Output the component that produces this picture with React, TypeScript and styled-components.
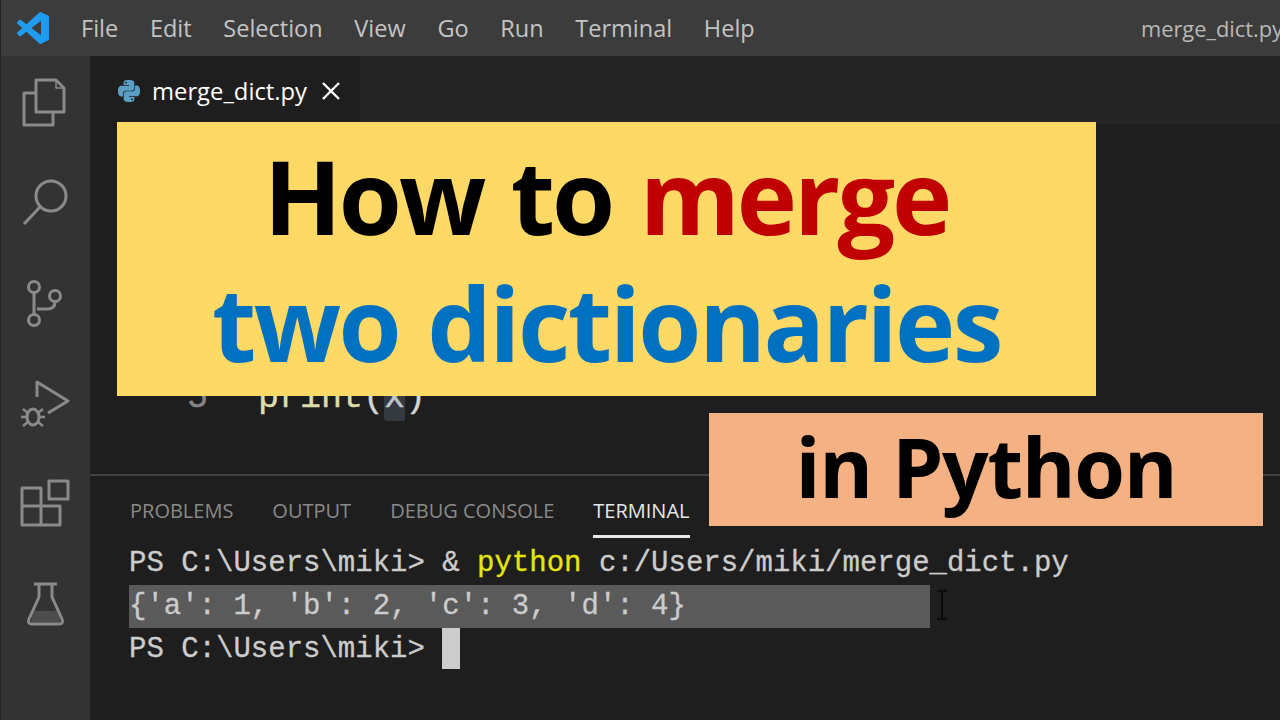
import React from 'react';
import styled, { createGlobalStyle } from 'styled-components';
import { SiPython } from 'react-icons/si';

const GlobalStyle = createGlobalStyle`
  html, body {
    margin: 0;
    padding: 0;
    background: #1e1e1e;
    overflow: hidden;
  }
`;

const Page = styled.div`
  position: relative;
  width: 1280px;
  height: 720px;
  display: flex;
  flex-direction: column;
  overflow: hidden;
  font-family: 'Open Sans', 'Noto Sans', sans-serif;
  border-left: 1px solid #222;
  box-sizing: border-box;
`;

const TitleBar = styled.header`
  height: 56px;
  flex: none;
  display: flex;
  align-items: center;
  background: #3c3c3c;
  padding-left: 16px;
  white-space: nowrap;
`;

const Menu = styled.nav`
  display: flex;
  gap: 31.7px;
  margin-left: 32px;
`;

const MenuItem = styled.span`
  font-size: 23.5px;
  color: #c4c4c4;
`;

const WindowTitle = styled.span`
  margin-left: auto;
  margin-right: -3px;
  font-size: 21.8px;
  color: #b8b8b8;
`;

const Body = styled.div`
  flex: 1;
  display: flex;
  min-height: 0;
`;

const ActivityBar = styled.aside`
  width: 89px;
  flex: none;
  box-sizing: border-box;
  background: #333333;
  display: flex;
  flex-direction: column;
  align-items: center;
  gap: 40px;
  padding-top: 17px;
`;

const ActivityIcon = styled.svg`
  width: 60px;
  height: 60px;
  flex: none;
  fill: none;
  stroke: #8a8a8a;
  stroke-width: 3;
  stroke-linejoin: round;
`;

const Main = styled.main`
  flex: 1;
  display: flex;
  flex-direction: column;
  min-width: 0;
`;

const TabStrip = styled.div`
  height: 68px;
  flex: none;
  display: flex;
  background: #252526;
`;

const Tab = styled.div`
  width: 270px;
  box-sizing: border-box;
  display: flex;
  align-items: center;
  padding: 2px 0 0 28px;
  background: #1e1e1e;
  color: #ffffff;
  font-size: 23.8px;
  font-weight: 500;
`;

const TabName = styled.span`
  margin-left: 12px;
  margin-right: 14px;
`;

const Editor = styled.section`
  height: 350px;
  flex: none;
  box-sizing: border-box;
  display: flex;
  flex-direction: column;
  justify-content: flex-end;
  padding-bottom: 53px;
  background: #1e1e1e;
`;

const CodeLine = styled.div`
  display: flex;
  height: 46px;
  line-height: 46px;
  font-family: 'Liberation Mono', monospace;
  font-size: 35px;
  -webkit-text-stroke: 0.4px currentColor;
`;

const LineNumber = styled.span`
  width: 168px;
  box-sizing: border-box;
  padding-left: 97px;
  color: #858585;
`;

const Fn = styled.span`
  color: #dcdcaa;
`;

const Paren = styled.span`
  color: #d4d4d4;
`;

const Highlighted = styled.span`
  color: #bcc6cc;
  background: #343a40;
  border-radius: 3px;
`;

const Panel = styled.section`
  flex: 1;
  background: #1e1e1e;
  border-top: 2px solid #414141;
  min-height: 0;
`;

const PanelTabs = styled.div`
  display: flex;
  gap: 39px;
  height: 62px;
  padding-left: 40px;
  align-items: flex-end;
`;

const PanelTab = styled.span<{ $active?: boolean }>`
  height: 39px;
  box-sizing: border-box;
  border-bottom: 3px solid ${(p) => (p.$active ? '#e7e7e7' : 'transparent')};
  font-size: 20px;
  line-height: 24px;
  color: ${(p) => (p.$active ? '#e7e7e7' : '#8a8a8a')};
`;

const Terminal = styled.div`
  padding: 4px 0 0 39px;
  font-family: 'Liberation Mono', monospace;
  font-size: 29px;
  color: #cccccc;
  -webkit-text-stroke: 0.3px currentColor;
`;

const TermLine = styled.div<{ $selected?: boolean }>`
  position: relative;
  display: flex;
  height: 43px;
  line-height: 43px;
  white-space: pre;
  width: ${(p) => (p.$selected ? '801px' : 'auto')};
  background: ${(p) => (p.$selected ? '#5a5a5a' : 'transparent')};
`;

const Command = styled.span`
  color: #e5e510;
`;

const Cursor = styled.span`
  width: 18px;
  height: 41px;
  margin-left: 17px;
  background: #cccccc;
`;

const IBeam = styled.svg`
  position: absolute;
  left: 805px;
  top: 4px;
  width: 16px;
  height: 32px;
  fill: none;
  stroke: #0c0c0c;
  stroke-width: 2;
`;

const Banner = styled.div`
  position: absolute;
  display: flex;
  flex-direction: column;
  align-items: center;
  justify-content: center;
  font-family: 'Open Sans', sans-serif;
  font-weight: 700;
  white-space: nowrap;
`;

const TitleBanner = styled(Banner)`
  left: 116px;
  top: 122px;
  width: 979px;
  height: 274px;
  background: #ffd966;
  font-size: 102px;
  line-height: 127px;
  color: #000000;
`;

const TitleLine = styled.span<{ $tight?: boolean }>`
  letter-spacing: ${(p) => (p.$tight ? '-3px' : '-2.5px')};
  word-spacing: 4px;
`;

const SubBanner = styled(Banner)`
  left: 708px;
  top: 413px;
  width: 554px;
  height: 113px;
  box-sizing: border-box;
  padding-bottom: 8px;
  background: #f4b183;
  font-size: 82px;
  letter-spacing: -1.3px;
  color: #000000;
`;

const Red = styled.span`
  color: #c00000;
`;

const Blue = styled.span`
  color: #0070c0;
`;

const VsCodeLogo = () => (
  <svg width="32" height="32" viewBox="0 0 100 100" fill="#1f9cf0">
    <path d="M96.46 10.8 75.86.9a6.2 6.2 0 0 0-7.1 1.2L29.5 38 12.4 25a4.2 4.2 0 0 0-5.3.2l-5.5 5a4.2 4.2 0 0 0 0 6.2L16.4 50 1.6 63.6a4.2 4.2 0 0 0 0 6.2l5.5 5a4.2 4.2 0 0 0 5.3.2l17.1-13 39.2 35.9a6.2 6.2 0 0 0 7.1 1.2l20.6-9.9a6.2 6.2 0 0 0 3.5-5.6V16.4a6.2 6.2 0 0 0-3.5-5.6ZM75 72.7 45.2 50 75 27.3Z" />
  </svg>
);

const CloseIcon = () => (
  <svg width="20" height="20" viewBox="0 0 20 20" fill="none" stroke="#fff" strokeWidth="2.4">
    <path d="M2 2 18 18M18 2 2 18" />
  </svg>
);

const menuItems = ['File', 'Edit', 'Selection', 'View', 'Go', 'Run', 'Terminal', 'Help'];
const panelTabs = ['PROBLEMS', 'OUTPUT', 'DEBUG CONSOLE', 'TERMINAL'];

export default function App() {
  return (
    <>
      <GlobalStyle />
      <Page>
        <TitleBar>
          <VsCodeLogo />
          <Menu>
            {menuItems.map((item) => (
              <MenuItem key={item}>{item}</MenuItem>
            ))}
          </Menu>
          <WindowTitle>merge_dict.py</WindowTitle>
        </TitleBar>
        <Body>
          <ActivityBar>
            <ActivityIcon viewBox="0 0 60 60">
              <path d="M20 7H40L48 15V39H20Z" />
              <path d="M40 7V15H48" strokeWidth="1.5" />
              <path d="M20 20H8V52H37V39" />
            </ActivityIcon>
            <ActivityIcon viewBox="0 0 60 60">
              <circle cx="35" cy="23" r="15" />
              <path d="M8 51 24 34" />
            </ActivityIcon>
            <ActivityIcon viewBox="0 0 60 60">
              <circle cx="18" cy="14" r="5.5" />
              <circle cx="18" cy="47" r="5.5" />
              <circle cx="39" cy="23" r="5.5" />
              <path d="M18 20V41M21 36H31Q39 36 39 29" />
            </ActivityIcon>
            <ActivityIcon viewBox="0 0 60 60">
              <path d="M21 24V9L52 28L32 40" />
              <ellipse cx="17" cy="44" rx="6" ry="8" />
              <path d="M7 36 12 40M27 36 22 40M5 44H11M23 44H29M7 53 12 49M27 53 22 49" strokeWidth="2.4" />
            </ActivityIcon>
            <ActivityIcon viewBox="0 0 60 60">
              <path d="M6 15H25V52H6ZM6 33H44V52H25" />
              <rect x="33" y="8" width="19" height="18" />
            </ActivityIcon>
            <ActivityIcon viewBox="0 0 60 60">
              <path d="M18 11H41M23 11V24L13 46Q11 51 16 51H43Q48 51 46 46L36 24V11" />
              <path d="M18 38H41L45 49H15Z" fill="#8a8a8a" stroke="none" opacity="0.3" />
            </ActivityIcon>
          </ActivityBar>
          <Main>
            <TabStrip>
              <Tab>
                <SiPython size={22} color="#5a9fc4" />
                <TabName>merge_dict.py</TabName>
                <CloseIcon />
              </Tab>
            </TabStrip>
            <Editor>
              <CodeLine>
                <LineNumber>5</LineNumber>
                <Fn>print</Fn>
                <Paren>(</Paren>
                <Highlighted>x</Highlighted>
                <Paren>)</Paren>
              </CodeLine>
            </Editor>
            <Panel>
              <PanelTabs>
                {panelTabs.map((tab) => (
                  <PanelTab key={tab} $active={tab === 'TERMINAL'}>
                    {tab}
                  </PanelTab>
                ))}
              </PanelTabs>
              <Terminal>
                <TermLine>
                  PS C:\Users\miki&gt; &amp; <Command>python</Command> c:/Users/miki/merge_dict.py
                </TermLine>
                <TermLine $selected>
                  {"{'a': 1, 'b': 2, 'c': 3, 'd': 4}"}
                  <IBeam viewBox="0 0 16 32">
                    <path d="M3 2H13M8 2V30M3 30H13" />
                  </IBeam>
                </TermLine>
                <TermLine>
                  PS C:\Users\miki&gt;
                  <Cursor />
                </TermLine>
              </Terminal>
            </Panel>
          </Main>
        </Body>
        <TitleBanner>
          <TitleLine $tight>
            How to <Red>merge</Red>
          </TitleLine>
          <TitleLine>
            <Blue>two dictionaries</Blue>
          </TitleLine>
        </TitleBanner>
        <SubBanner>in Python</SubBanner>
      </Page>
    </>
  );
}
